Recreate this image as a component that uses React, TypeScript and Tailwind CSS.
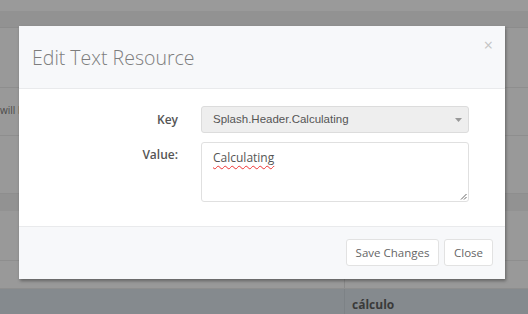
import React from "react";

export default function App() {
  const os = { fontFamily: '"Open Sans", "Noto Sans", sans-serif' } as React.CSSProperties;
  return (
    <div className="relative w-[528px] h-[314px] overflow-hidden bg-[#999999]" style={os}>
      {/* background page */}
      <div className="flex flex-col w-full h-full">
        <div className="h-[11px] bg-[#9a9a9a]" />
        <div className="h-[17px] bg-[#929292] border-b border-[#8c8c8c]" />
        <div className="h-[60px] border-b border-[#8e8e8e]" />
        <div className="h-[48px] border-b border-[#8e8e8e] flex items-center">
          <span className="text-[10px] text-[#4a4a4a] -mt-[2px]">will be</span>
        </div>
        <div className="h-[59px] border-b border-[#8e8e8e]" />
        <div className="h-[17px] bg-[#929292]" />
        <div className="h-[50px] border-b border-[#8e8e8e]" />
        <div className="h-[28px] flex border-b border-[#8e8e8e]">
          <div className="w-[345px] border-r border-[#8a8a8a] flex justify-end items-center pr-[3px]">
            <span className="text-[12px] text-[#555] font-bold">12</span>
          </div>
          <div className="pl-[13px] flex items-center text-[12px] text-[#555]">Value</div>
        </div>
        <div className="flex-1 flex bg-[#858a8e]">
          <div className="w-[345px] border-r border-[#7d8286]" />
          <div className="pl-[7px] pt-[7px] text-[12px] font-bold text-[#3a3a3a]">cálculo</div>
        </div>
      </div>

      {/* modal */}
      <div className="absolute left-[19px] top-[26px] w-[486px] h-[253px] bg-white flex flex-col shadow-[1px_2px_3px_rgba(0,0,0,0.35)]">
        <div className="h-[63px] bg-[#f7f8fa] border-b border-[#e9eaec] flex items-center justify-between pl-[13px] pr-[13px] relative">
          <h4 className="text-[19.5px] font-light text-[#7d7d7d] leading-none mt-[2px]">Edit Text Resource</h4>
          <span className="absolute right-[12px] top-[11px] text-[16px] text-[#c4c4c4] leading-none">×</span>
        </div>
        <div className="flex-1 flex flex-col gap-[9px] pt-[17px]">
          <div className="flex items-center">
            <label className="w-[159px] text-right text-[12px] font-semibold text-[#555]">Key</label>
            <div className="ml-[23px] w-[268px] h-[27px] rounded-[3px] border border-[#dcdcdc] bg-[#eeeeee] flex items-center justify-between pl-[11px] pr-[6px]">
              <span className="text-[11.5px] text-[#555]" style={{ fontFamily: '"Liberation Sans", Arial, sans-serif' }}>
                Splash.Header.Calculating
              </span>
              <svg width="7" height="4" viewBox="0 0 7 4"><path d="M0 0h7L3.5 4z" fill="#999" /></svg>
            </div>
          </div>
          <div className="flex items-start">
            <label className="w-[159px] text-right text-[12px] font-semibold text-[#555] pt-[4px]">Value:</label>
            <div className="ml-[23px] w-[268px] h-[60px] rounded-[3px] border border-[#e0e0e0] bg-white relative pl-[11px] pt-[5px] leading-[16px]">
              <span className="text-[12px] text-[#555] underline decoration-wavy decoration-[#e33] decoration-[1px] underline-offset-[3px]">
                Calculating
              </span>
              <svg className="absolute right-[1px] bottom-[1px]" width="7" height="7" viewBox="0 0 7 7">
                <path d="M6.5 1L1 6.5M6.5 4L4 6.5" stroke="#666" strokeWidth="1" />
              </svg>
            </div>
          </div>
        </div>
        <div className="h-[53px] bg-[#f7f8fa] border-t border-[#e9eaec] flex items-start justify-end gap-[5px] pr-[12px] pt-[12px]">
          <button className="w-[93px] h-[27px] bg-white border border-[#e2e2e2] rounded-[3px] text-[11.5px] text-[#666]">
            Save Changes
          </button>
          <button className="w-[49px] h-[27px] bg-white border border-[#e2e2e2] rounded-[3px] text-[11.5px] text-[#666]">
            Close
          </button>
        </div>
      </div>
    </div>
  );
}
